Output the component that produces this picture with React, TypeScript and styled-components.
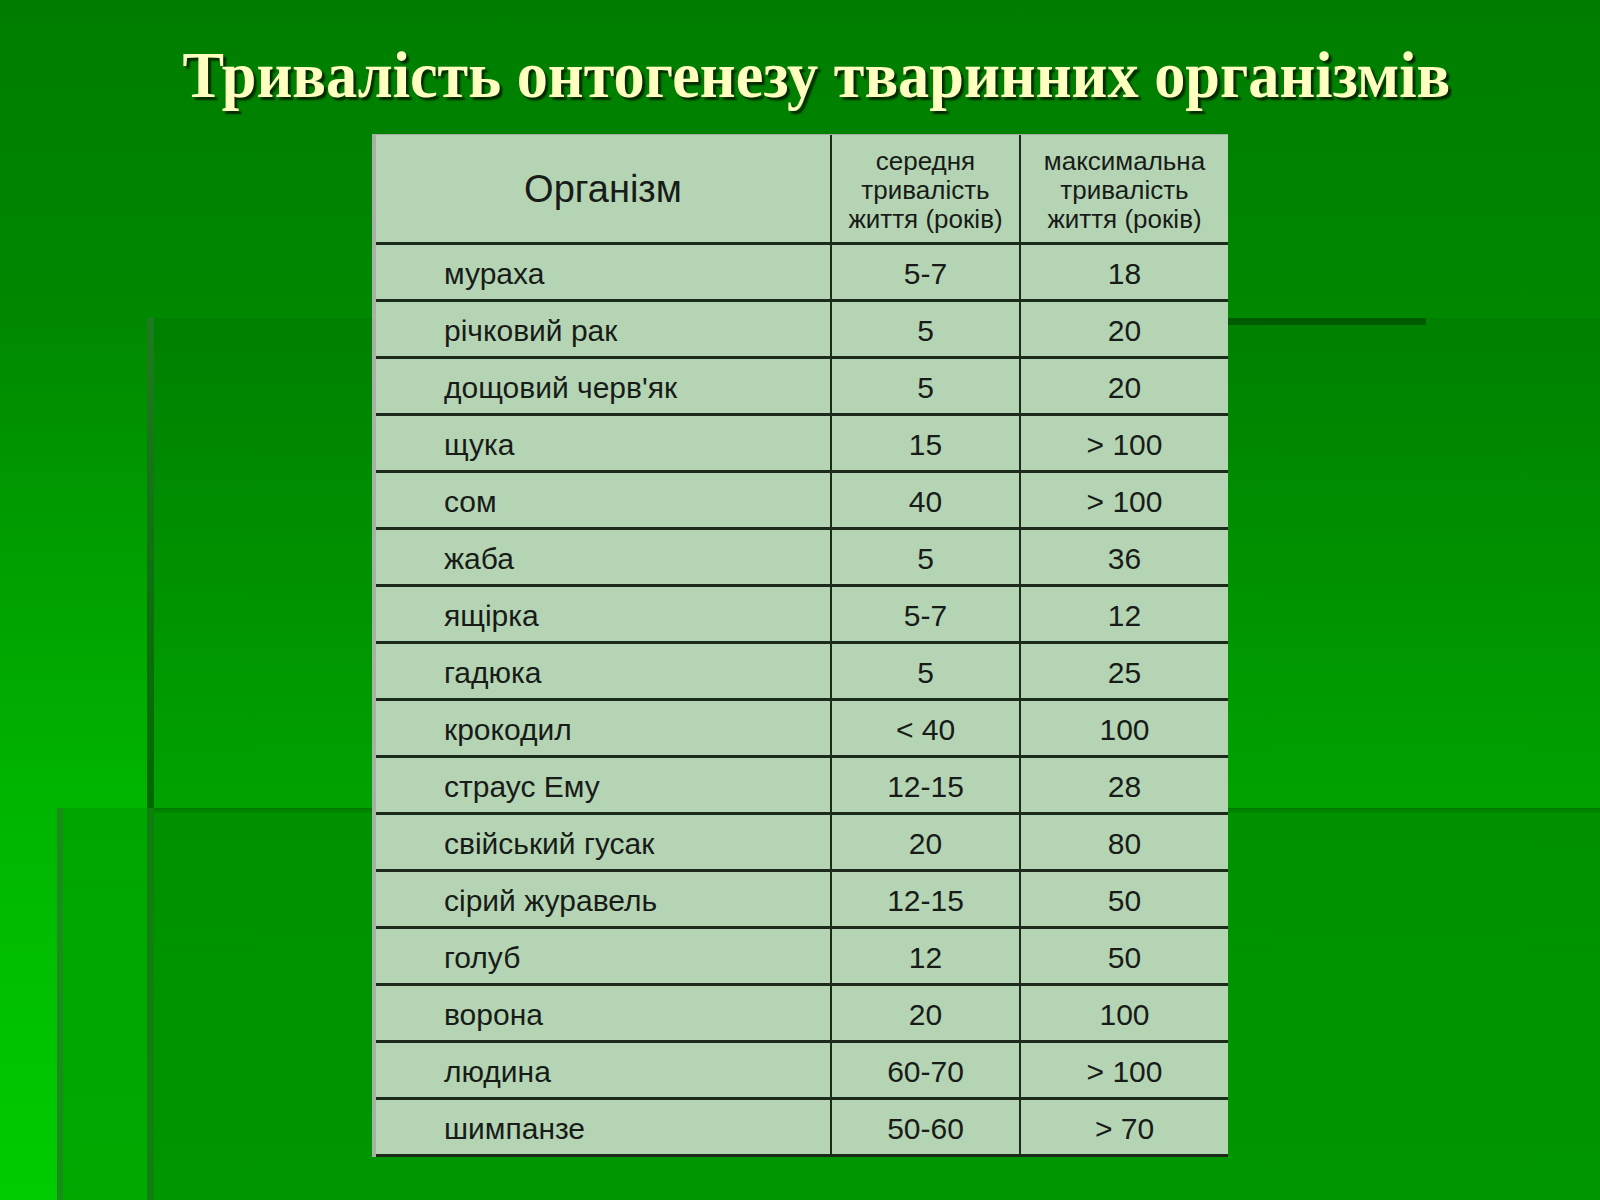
import React from "react";
import styled, { createGlobalStyle } from "styled-components";

const GlobalStyle = createGlobalStyle`
  html, body { margin: 0; padding: 0; }
  body { background: #007e00; }
  * { box-sizing: border-box; }
`;

const Page = styled.div`
  width: 1600px;
  height: 1200px;
  overflow: hidden;
  display: flex;
  flex-direction: column;
  background:
    linear-gradient(#005a00, #005a00) 1228px 318px / 198px 7px no-repeat,
    linear-gradient(#1f7a1f, #006800) 147px 318px / 7px 490px no-repeat,
    linear-gradient(#0f7e0f, #0f800f) 147px 808px / 7px 392px no-repeat,
    linear-gradient(#1a8c1a, #1a8c1a) 57px 808px / 6px 392px no-repeat,
    linear-gradient(#007a00, #008a00) 154px 808px / 1446px 5px no-repeat,
    linear-gradient(#009200, #009600) 154px 808px / 1446px 392px no-repeat,
    linear-gradient(#00a600, #00a800) 63px 808px / 84px 392px no-repeat,
    linear-gradient(#008000, #00a200) 154px 318px / 1446px 490px no-repeat,
    linear-gradient(#007d00 0%, #008800 26%, #00b400 66%, #00cc00 100%) 0 0 / 100% 100% no-repeat;
`;

const Title = styled.h1`
  margin: 0;
  padding: 42px 0 0 32px;
  height: 134px;
  text-align: center;
  font-family: "Liberation Serif", "Times New Roman", serif;
  font-weight: bold;
  font-size: 66px;
  line-height: 66px;
  color: #ffffc0;
  white-space: nowrap;
`;

const TitleText = styled.span`
  display: inline-block;
  transform: scaleX(0.944);
  transform-origin: center;
  text-shadow: 3px 3px 2px rgba(8, 32, 0, 0.9);
`;

const Table = styled.div`
  margin-left: 372px;
  width: 856px;
  display: flex;
  flex-direction: column;
  background: #b5d4b4;
  border-left: 4px solid #a7b1a6;
  border-top: 1px solid #a3aea2;
  font-family: "Liberation Sans", Arial, sans-serif;
  color: #181c18;
`;

const Row = styled.div<{ $header?: boolean }>`
  display: grid;
  grid-template-columns: 454px 189px 1fr;
  height: ${(p) => (p.$header ? "110px" : "57px")};
  border-bottom: 3px solid #1c2a1c;
`;

const Cell = styled.div<{ $align?: "left" | "center"; $divider?: boolean; $header?: boolean }>`
  display: flex;
  align-items: center;
  justify-content: ${(p) => (p.$align === "left" ? "flex-start" : "center")};
  padding-left: ${(p) => (p.$align === "left" ? "68px" : "0")};
  padding-top: ${(p) => (p.$header ? "0" : "4px")};
  border-left: ${(p) => (p.$divider ? "2px solid #1c2a1c" : "none")};
  font-size: 30px;
  line-height: 1;
  white-space: nowrap;
`;

const HeadMain = styled.span`
  font-size: 38px;
  line-height: 1;
`;

const HeadSmall = styled.span`
  font-size: 26px;
  line-height: 29px;
  text-align: center;
  padding-top: 3px;
`;

type Rec = [string, string, string];

const rows: Rec[] = [
  ["мураха", "5-7", "18"],
  ["річковий рак", "5", "20"],
  ["дощовий черв'як", "5", "20"],
  ["щука", "15", "> 100"],
  ["сом", "40", "> 100"],
  ["жаба", "5", "36"],
  ["ящірка", "5-7", "12"],
  ["гадюка", "5", "25"],
  ["крокодил", "< 40", "100"],
  ["страус Ему", "12-15", "28"],
  ["свійський гусак", "20", "80"],
  ["сірий журавель", "12-15", "50"],
  ["голуб", "12", "50"],
  ["ворона", "20", "100"],
  ["людина", "60-70", "> 100"],
  ["шимпанзе", "50-60", "> 70"],
];

export default function App() {
  return (
    <>
      <GlobalStyle />
      <Page>
        <Title>
          <TitleText>Тривалість онтогенезу тваринних організмів</TitleText>
        </Title>
        <Table>
          <Row $header>
            <Cell $header>
              <HeadMain>Організм</HeadMain>
            </Cell>
            <Cell $header $divider>
              <HeadSmall>
                середня
                <br />
                тривалість
                <br />
                життя (років)
              </HeadSmall>
            </Cell>
            <Cell $header $divider>
              <HeadSmall>
                максимальна
                <br />
                тривалість
                <br />
                життя (років)
              </HeadSmall>
            </Cell>
          </Row>
          {rows.map(([name, avg, max]) => (
            <Row key={name}>
              <Cell $align="left">{name}</Cell>
              <Cell $divider>{avg}</Cell>
              <Cell $divider>{max}</Cell>
            </Row>
          ))}
        </Table>
      </Page>
    </>
  );
}
